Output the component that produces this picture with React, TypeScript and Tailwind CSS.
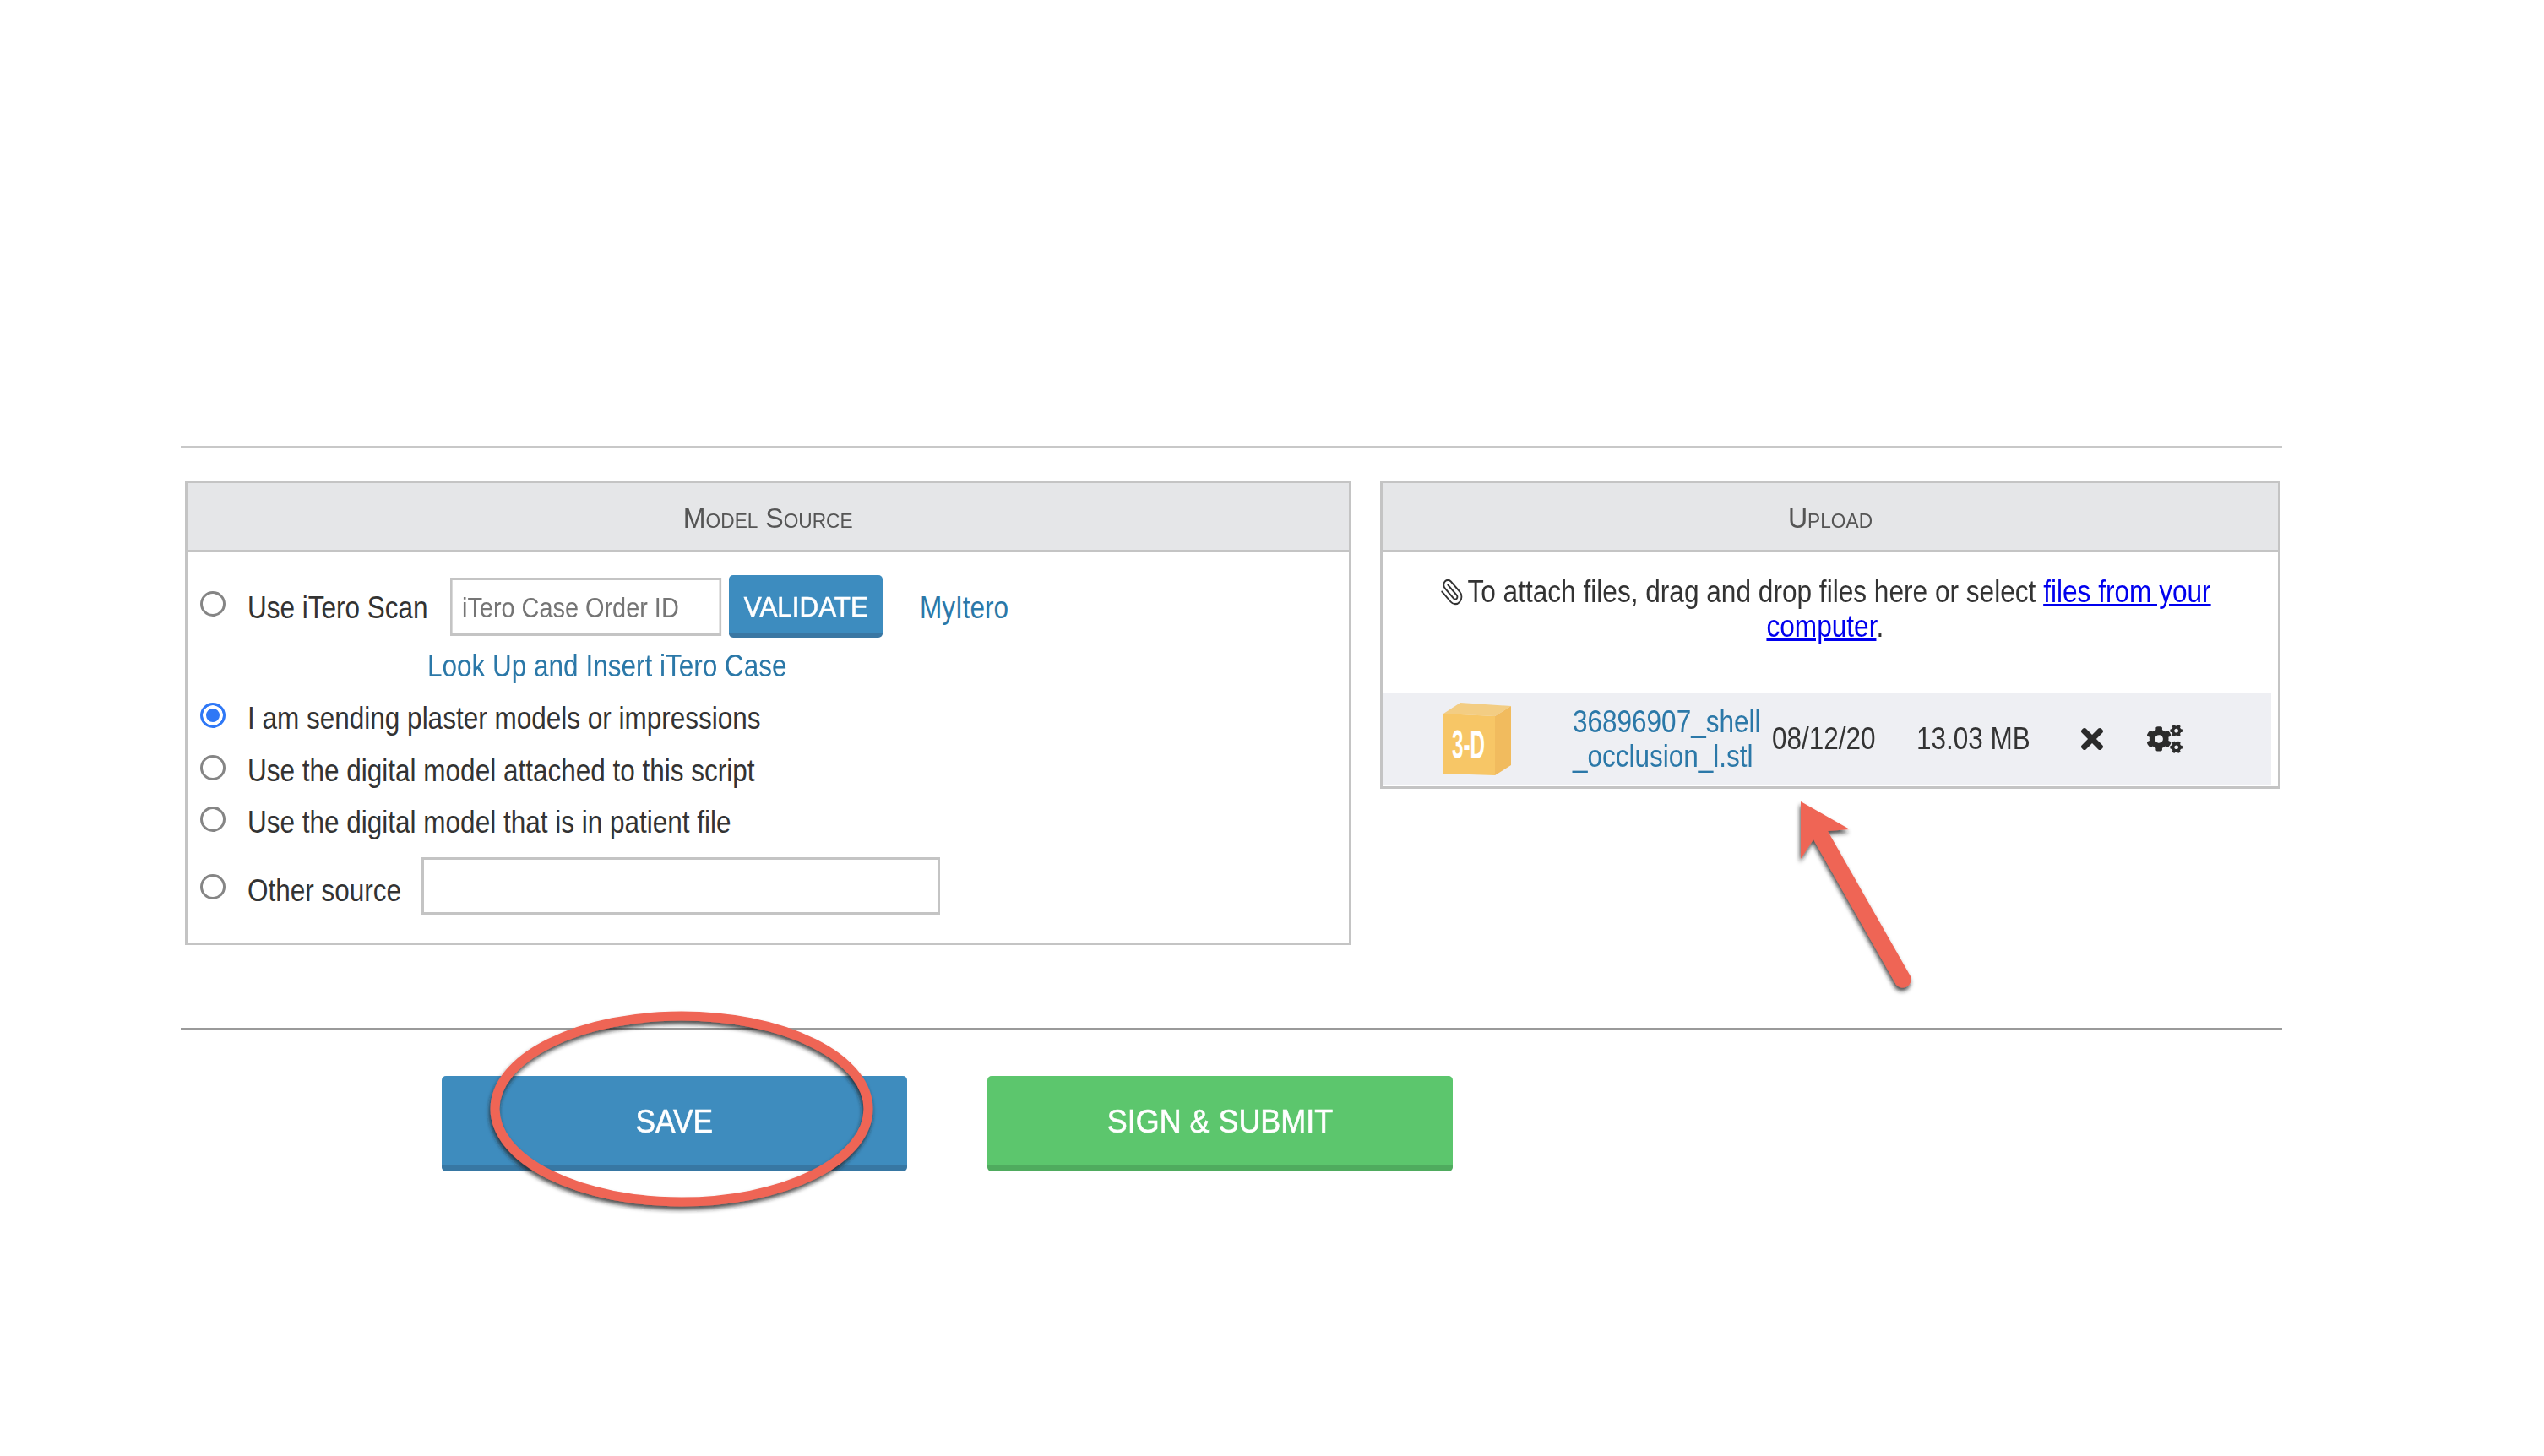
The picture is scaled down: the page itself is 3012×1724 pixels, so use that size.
import * as React from 'react'
import {FaCogs, FaTimes} from 'react-icons/fa'
import {Paperclip} from 'lucide-react'

const Radio: React.FC<{checked?: boolean; className?: string}> = ({checked, className = ''}) => (
  <input
    type="radio"
    name="source"
    defaultChecked={checked}
    className={`m-0 h-[30px] w-[30px] shrink-0 appearance-none rounded-full border-[3px] border-[#858585] bg-white checked:border-[#2f78f6] checked:bg-[#2f78f6] checked:shadow-[inset_0_0_0_4px_#ffffff] ${className}`}
  />
)

// the screenshot is squeezed sideways, so the text is too
const Txt: React.FC<{children: React.ReactNode; className?: string}> = ({children, className = ''}) => (
  <span className={`inline-block origin-left scale-x-[0.875] whitespace-nowrap ${className}`}>{children}</span>
)

const PanelHeader: React.FC<{title: string}> = ({title}) => (
  <div className="flex h-[82px] items-center justify-center border-b-[3px] border-[#c4c4c4] bg-[#e5e6e8] pt-[4px] text-[34px] text-[#555] [font-variant:small-caps]">
    <span className="scale-x-[0.945]">{title}</span>
  </div>
)

const Box3D = () => (
  <svg width="80" height="86" viewBox="0 0 80 86" className="shrink-0">
    <path d="M0 13 L20 0 L80 4 L61 16 Z" fill="#f3cd83" />
    <path d="M0 13 L61 16 L61 86 L0 84 Z" fill="#f7c666" />
    <path d="M61 16 L80 4 L80 74 L61 86 Z" fill="#f1bb5e" />
    <text
      x="10"
      y="66"
      textLength="39"
      lengthAdjust="spacingAndGlyphs"
      fill="#fff"
      fontSize="48"
      fontWeight="700"
      fontFamily="'Liberation Sans', sans-serif"
    >
      3-D
    </text>
  </svg>
)

const Marks = () => (
  <svg width="3012" height="1724" viewBox="0 0 3012 1724" className="pointer-events-none absolute top-0 left-0">
    <defs>
      <filter id="mark-shadow" x="-10%" y="-10%" width="120%" height="120%">
        <feDropShadow dx="-1" dy="4" stdDeviation="2.5" floodColor="#222" floodOpacity="0.8" />
      </filter>
    </defs>
    <ellipse cx="807" cy="1313" rx="221" ry="110" fill="none" stroke="#ef6555" strokeWidth="11" filter="url(#mark-shadow)" />
    <path
      d="M2132 949 L2190 982 L2164 984 L2262 1156 A10 10 0 0 1 2245 1166 L2147 994 L2132 1017 Z"
      fill="#ef6555"
      filter="url(#mark-shadow)"
    />
  </svg>
)

export default function App() {
  return (
    <div className="relative h-[1724px] w-[3012px] overflow-hidden bg-white font-['Liberation_Sans',Arial,sans-serif] text-[36px] text-[#333]">
      <div className="w-[2702px] pt-[528px] pl-[214px]">
        <div className="h-[3px] bg-[#c8c8c8]" />

        <div className="mt-[38px] flex items-start pl-[5px]">
          <div className="h-[550px] w-[1381px] border-[3px] border-[#c4c4c4]">
            <PanelHeader title="Model Source" />
            <div className="pt-[27px] pl-[15px]">
              <div className="flex h-[74px] items-center">
                <Radio className="-translate-y-[3px]" />
                <div className="ml-[26px] w-[240px]">
                  <Txt className="translate-y-[2px]">Use iTero Scan</Txt>
                </div>
                <input
                  placeholder="iTero Case Order ID"
                  className="mr-[-46px] h-[69px] w-[367px] origin-left scale-x-[0.875] border-[3px] border-[#c4c4c4] px-[13px] pt-[3px] text-[33px] outline-none placeholder:text-[#757575]"
                />
                <button className="ml-[9px] h-[74px] w-[182px] rounded-[5px] border-b-[6px] border-[#3a77a3] bg-[#3d8cbf] pt-[7px] text-[33px] text-white [-webkit-text-stroke:0.6px_white]">
                  <span className="inline-block scale-x-[0.95]">VALIDATE</span>
                </button>
                <a className="ml-[44px] text-[#2b78a8]">
                  <Txt className="translate-y-[2px]">MyItero</Txt>
                </a>
              </div>
              <div className="mt-[13px] pl-[269px] leading-[42px] text-[#2b78a8]">
                <Txt>Look Up and Insert iTero Case</Txt>
              </div>
              <div className="mt-[16px] flex h-[42px] items-center gap-[26px]">
                <Radio checked />
                <Txt className="translate-y-[4px]">I am sending plaster models or impressions</Txt>
              </div>
              <div className="mt-[20px] flex h-[42px] items-center gap-[26px]">
                <Radio />
                <Txt className="translate-y-[4px]">Use the digital model attached to this script</Txt>
              </div>
              <div className="mt-[19px] flex h-[42px] items-center gap-[26px]">
                <Radio />
                <Txt className="translate-y-[4px]">Use the digital model that is in patient file</Txt>
              </div>
              <div className="mt-[24px] flex h-[68px] items-center">
                <Radio className="translate-y-[1px]" />
                <div className="ml-[26px] w-[206px]">
                  <Txt className="translate-y-[6px]">Other source</Txt>
                </div>
                <input className="h-[68px] w-[614px] border-[3px] border-[#c4c4c4] outline-none" />
              </div>
            </div>
          </div>

          <div className="ml-[34px] h-[365px] w-[1066px] border-[3px] border-[#c4c4c4]">
            <PanelHeader title="Upload" />
            <div className="mt-[26px] scale-x-[0.878] pr-[14px] text-center leading-[41px] whitespace-nowrap">
              <div>
                <Paperclip className="mr-[4px] inline-block h-[36px] w-[34px] -scale-x-100 align-[-6px]" strokeWidth={1.5} />
                To attach files, drag and drop files here or select{' '}
                <a className="text-[#0000ee] underline">files from your</a>
              </div>
              <div>
                <a className="text-[#0000ee] underline">computer</a>.
              </div>
            </div>
            <div className="mt-[58px] flex h-[110px] w-[1052px] items-center bg-[#eeeff3] pl-[72px]">
              <Box3D />
              <a className="ml-[73px] w-[236px] leading-[41px] text-[#2b78a8]">
                <Txt className="block scale-x-[0.85]">36896907_shell</Txt>
                <Txt className="block scale-x-[0.85]">_occlusion_l.stl</Txt>
              </a>
              <div className="w-[171px]">
                <Txt className="scale-x-[0.89]">08/12/20</Txt>
              </div>
              <div className="w-[189px]">
                <Txt>13.03 MB</Txt>
              </div>
              <FaTimes className="h-[38px] w-[38px] text-[#2b2b2b]" />
              <FaCogs className="ml-[46px] h-[42px] w-[42px] text-[#2b2b2b]" />
            </div>
          </div>
        </div>

        <div className="mt-[98px] h-[3px] bg-[#9a9a9a]" />

        <div className="mt-[54px] flex gap-[95px] pl-[309px] text-[38px] text-white [-webkit-text-stroke:0.6px_white]">
          <button className="h-[113px] w-[551px] rounded-[5px] border-b-[8px] border-[#3777a3] bg-[#3e8cbe] pt-[4px]">
            <span className="inline-block scale-x-[0.93]">SAVE</span>
          </button>
          <button className="h-[113px] w-[551px] rounded-[5px] border-b-[8px] border-[#4fab5e] bg-[#5cc66d] pt-[4px]">
            <span className="inline-block scale-x-[0.945]">SIGN &amp; SUBMIT</span>
          </button>
        </div>
      </div>
      <Marks />
    </div>
  )
}
